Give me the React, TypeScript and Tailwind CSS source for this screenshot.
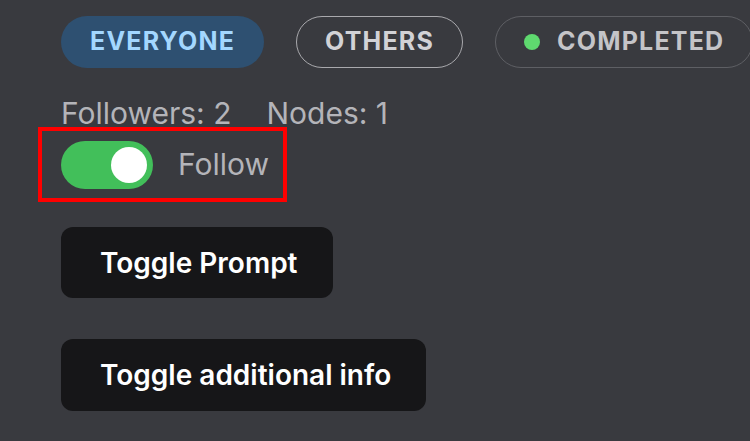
import React from "react";

export default function App() {
  return (
    <div
      className="w-[750px] h-[441px] overflow-hidden bg-[#393a3f] pl-[61px] pt-[16px]"
      style={{ fontFamily: "Inter, 'Noto Sans', sans-serif" }}
    >
      <div className="flex items-center gap-[32px] whitespace-nowrap">
        <div className="h-[52px] flex items-center px-[29px] rounded-full bg-[#2e5071] text-[#a3d7ff] text-[25px] font-bold tracking-[1.2px]">
          EVERYONE
        </div>
        <div className="h-[52px] flex items-center px-[28px] rounded-full border-[1.5px] border-[#a9a9ad] text-[#d2d2d6] text-[25px] font-bold tracking-[1.2px]">
          OTHERS
        </div>
        <div className="h-[52px] flex items-center pl-[28px] pr-[28px] rounded-full border-[1.5px] border-[#5e5f64] text-[#c4c4c8] text-[25px] font-bold tracking-[1.2px] shrink-0">
          <span className="w-[16px] h-[16px] rounded-full bg-[#5fd96f] mr-[17px]" />
          COMPLETED
        </div>
      </div>

      <div className="mt-[28px] flex gap-[35px] text-[30px] leading-[34px] text-[#b4b4b9] whitespace-nowrap">
        <span>Followers: 2</span>
        <span>Nodes: 1</span>
      </div>

      <div className="ml-[-23px] mt-[-3px] w-[249px] h-[75px] border-[4px] border-[#ff0000] flex items-center pl-[19px]">
        <div className="w-[92px] h-[48px] rounded-full bg-[#42bf5a] flex items-center justify-end pr-[6px]">
          <div className="w-[36px] h-[36px] rounded-full bg-white" />
        </div>
        <span className="ml-[25px] text-[30px] text-[#b4b4b9]">Follow</span>
      </div>

      <div className="mt-[25px] flex flex-col items-start gap-[41px]">
        <button className="h-[71px] w-[272px] rounded-[12px] bg-[#161618] text-white text-[28px] font-semibold text-left pl-[39px]">
          Toggle Prompt
        </button>
        <button className="h-[72px] w-[365px] rounded-[12px] bg-[#161618] text-white text-[28px] font-semibold text-left pl-[39px]">
          Toggle additional info
        </button>
      </div>
    </div>
  );
}
